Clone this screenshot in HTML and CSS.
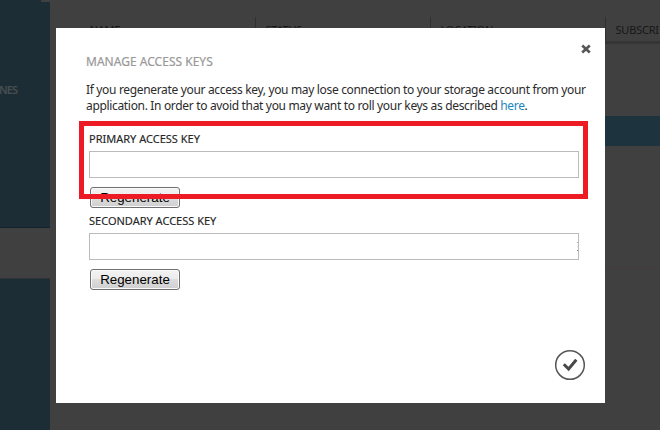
FILE: index.html
```html
<!DOCTYPE html>
<html lang="en">
<head>
<meta charset="utf-8">
<title>Manage Access Keys</title>
<link rel="stylesheet" href="styles.css">
</head>
<body>
<div class="page">
  <aside class="sidebar">
    <div class="side-top"><span class="side-label">NES</span></div>
    <div class="side-selected"></div>
    <div class="side-bottom"></div>
  </aside>
  <main class="content">
    <div class="table-head">
      <span class="col">NAME</span><span class="col">STATUS</span><span class="col">LOCATION</span><span class="col">SUBSCRI</span>
    </div>
    <div class="selected-row"></div>
    <div class="row-line"></div>
  </main>
</div>
<section class="dialog">
  <header class="dialog-head">
    <h1 class="title">MANAGE ACCESS KEYS</h1>
    <svg class="close" width="10" height="10" viewBox="0 0 10 10"><path d="M1.2 1.5 8.8 8.5M8.8 1.5 1.2 8.5"/></svg>
  </header>
  <p class="intro"><span class="line first">If you regenerate your access key, you may lose connection to your storage account from your</span><span class="line second">application. In order to avoid that you may want to roll your keys as described <a class="link">here</a>.</span></p>
  <div class="field">
    <label class="label primary">PRIMARY ACCESS KEY</label>
    <div class="input"></div>
    <button class="regen">Regenerate</button>
  </div>
  <div class="field">
    <label class="label secondary">SECONDARY ACCESS KEY</label>
    <div class="input"><span class="residue"></span></div>
    <button class="regen">Regenerate</button>
  </div>
  <footer class="dialog-foot">
    <svg class="ok" width="32" height="32" viewBox="0 0 32 32"><circle cx="16" cy="16" r="14.3"/><path d="M9.8 15.3 14.6 20 22.3 10.8"/></svg>
  </footer>
  <div class="highlight"></div>
</section>
</body>
</html>
```
FILE: styles.css
```css
* { box-sizing: border-box; }
body { margin: 0; width: 660px; height: 430px; overflow: hidden; background: #404040; font-family: "Noto Sans", "Open Sans", sans-serif; }
.page { display: flex; height: 430px; }
.sidebar { width: 50px; display: flex; flex-direction: column; flex: none; }
.side-top { height: 228px; background: linear-gradient(#404040, #404040) 41px 0 / 9px 2px no-repeat #1d2d35; border-bottom: 1px solid #15222a; padding-top: 82px; }
.side-label { display: block; font-size: 11px; line-height: 16px; letter-spacing: -0.9px; color: #484d50; font-weight: 600; margin-left: -1px; }
.side-selected { height: 50px; }
.side-bottom { flex: 1; background: #1d2d35; border-top: 1px solid #303437; }
.content { flex: 1; min-width: 0; padding: 17px 0 0 30px; }
.table-head { display: flex; height: 27px; border-bottom: 3px solid #353535; overflow: hidden; }
.col { width: 175px; flex: none; border-left: 1px solid #303030; padding-left: 9.5px; font-size: 11px; line-height: 26px; letter-spacing: -0.2px; color: #171717; }
.col:first-child { border-left-color: transparent; padding-left: 8.5px; }
.col:last-child { width: 55px; }
.selected-row { height: 30px; margin-top: 72px; background: #1d333e; }
.row-line { height: 1px; margin-top: 122px; background: #443a3f; }
.dialog { position: absolute; left: 56px; top: 28px; width: 549px; height: 375px; background: #fff; padding: 16px 14px 0 30px; display: flex; flex-direction: column; }
.dialog-head { display: flex; justify-content: space-between; height: 36px; }
.title { margin: 9px 0 0; font-size: 12px; line-height: 18px; font-weight: 400; letter-spacing: 0.02px; color: #999; -webkit-text-stroke: 0.2px #999; }
.close { stroke: #555; stroke-width: 2.6; fill: none; }
.intro { margin: 2px 0 0; font-size: 12px; line-height: 16px; color: #2b2b2b; }
.line { display: block; white-space: nowrap; }
.first { letter-spacing: -0.335px; }
.second { letter-spacing: -0.33px; }
.link { color: #1b86c0; }
.field { display: flex; flex-direction: column; align-items: flex-start; padding-left: 3px; height: 82px; }
.intro + .field { margin-top: 17px; }
.label { font-size: 11px; line-height: 16px; height: 20px; color: #262626; white-space: nowrap; letter-spacing: 0; -webkit-text-stroke: 0.15px #262626; }
.input { width: 490px; height: 27px; flex: none; border: 1px solid #bbb; background: #fff; display: flex; justify-content: flex-end; align-items: center; }
.residue { width: 1px; height: 9px; background: linear-gradient(#9cb5b5 1px, #fff 1px 4px, #dbecec 4px 5px, #fff 5px 8px, #789 8px); }
.regen { width: 90px; height: 21px; flex: none; margin: 9px 0 0 1px; padding: 0; border: 1px solid #707070; border-radius: 3px; background: linear-gradient(#f2f2f2, #ebebeb 50%, #dddddd 50%, #cfcfcf); box-shadow: inset 0 0 0 1px #fafafa; font: 13.33px/19px "Liberation Sans", Arial, sans-serif; color: #000; }
.dialog-foot { display: flex; justify-content: flex-end; margin-top: 54px; padding-right: 5px; }
.ok { fill: none; stroke: #555; stroke-width: 1.5; }
.ok path { stroke: #484848; stroke-width: 3; }
.highlight { position: absolute; left: 23px; top: 93px; width: 509px; height: 78px; border: 5px solid #ed1c24; }
```
